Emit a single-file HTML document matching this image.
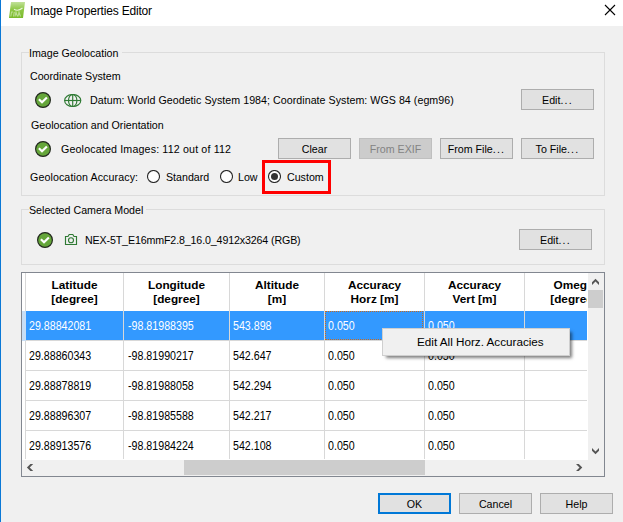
<!DOCTYPE html>
<html><head><meta charset="utf-8">
<style>
*{box-sizing:border-box;margin:0;padding:0}
html,body{width:623px;height:522px;overflow:hidden;background:#f0f0f0;position:relative;font-family:"Liberation Sans",sans-serif;font-size:10.67px;color:#000}
.a{position:absolute}
.t{position:absolute;white-space:nowrap;line-height:13px;font-size:10.67px}
.btn{position:absolute;width:73px;height:21px;background:#e1e1e1;border:1px solid #adadad;text-align:center;line-height:19px;padding-top:1px;font-size:10.67px;white-space:nowrap}
.dd{letter-spacing:1.2px}
.gb{position:absolute;border:1px solid #dcdcdc}
.chk{position:absolute;width:16px;height:16px}
.radio{position:absolute;width:13px;height:13px;border-radius:50%;background:#fff;border:1px solid #333}
.vl{position:absolute;width:1px;background:#d8d8d8}
.hl{position:absolute;height:1px;background:#d8d8d8}
.hd{position:absolute;font-weight:bold;font-size:11.8px;line-height:14px;text-align:center;white-space:nowrap}
.cell{position:absolute;white-space:nowrap;line-height:13px;font-size:10.67px;transform:scaleY(1.12);transform-origin:0 2px}
</style></head><body>
<!-- title bar -->
<div class="a" style="left:0;top:0;width:623px;height:26px;background:#fff"></div>
<div class="a" style="left:0;top:0;width:1px;height:522px;background:#0a78d6"></div>
<svg class="a" style="left:8px;top:1px" width="18" height="18" viewBox="0 0 18 18">
<defs><linearGradient id="ig" x1="0" y1="0" x2="0" y2="1"><stop offset="0" stop-color="#c2e19a"/><stop offset="0.45" stop-color="#8fc847"/><stop offset="1" stop-color="#7aba2c"/></linearGradient></defs>
<polygon points="3,1 17,1 15,17 1,17" fill="url(#ig)"/>
<path d="M6,8.2 Q10,10.8 14.5,7" stroke="#eaf5dc" stroke-width="1.1" fill="none"/>
<path d="M2.8,15.5 L3.6,11 L5,11 M5.5,15.5 L6.3,11 M7,15.5 L8,11 L9.5,15.5 M10,15.5 L11,11 L12.5,15.5" stroke="#cfe8b3" stroke-width="1.1" fill="none" opacity="0.75"/>
</svg>
<div class="t" style="left:30px;top:4px;font-size:12px;letter-spacing:-0.18px;line-height:14px">Image Properties Editor</div>
<svg class="a" style="left:604px;top:4px" width="12" height="12" viewBox="0 0 12 12"><path d="M1,1 L11,11 M11,1 L1,11" stroke="#000" stroke-width="1.1"/></svg>

<!-- group box 1 -->
<div class="gb" style="left:21px;top:52px;width:584px;height:144px"></div>
<div class="a" style="left:29px;top:46px;width:93px;height:12px;background:#f0f0f0"></div>
<div class="t" style="left:29px;top:47px">Image Geolocation</div>
<div class="t" style="left:30px;top:70px">Coordinate System</div>

<svg class="chk" style="left:35px;top:92px" viewBox="0 0 16 16"><circle cx="8" cy="8" r="7.4" fill="#65a63a" stroke="#23291f" stroke-width="1.2"/><path d="M3.9,7.3 L7,10.3 L11.9,5.5" stroke="#fff" stroke-width="2.2" fill="none"/></svg>
<svg class="a" style="left:64px;top:94px" width="18" height="14" viewBox="0 0 18 14"><g stroke="#2f7a34" stroke-width="1.15" fill="none"><ellipse cx="8.7" cy="6.5" rx="8.1" ry="6"/><ellipse cx="8.7" cy="6.5" rx="4.2" ry="6"/><line x1="8.7" y1="0.5" x2="8.7" y2="12.5"/><line x1="0.6" y1="6.5" x2="16.8" y2="6.5"/></g></svg>
<div class="t" style="left:90px;top:94px;letter-spacing:0.04px">Datum: World Geodetic System 1984; Coordinate System: WGS 84 (egm96)</div>
<div class="btn" style="left:521px;top:89px">Edit<span class="dd">...</span></div>

<div class="t" style="left:31px;top:119px">Geolocation and Orientation</div>
<svg class="chk" style="left:35px;top:141px" viewBox="0 0 16 16"><circle cx="8" cy="8" r="7.4" fill="#65a63a" stroke="#23291f" stroke-width="1.2"/><path d="M3.9,7.3 L7,10.3 L11.9,5.5" stroke="#fff" stroke-width="2.2" fill="none"/></svg>
<div class="t" style="left:61px;top:143px;letter-spacing:0.16px">Geolocated Images: 112 out of 112</div>
<div class="btn" style="left:278px;top:138px">Clear</div>
<div class="btn" style="left:359px;top:138px;background:#cccccc;border-color:#bfbfbf;color:#838383">From EXIF</div>
<div class="btn" style="left:440px;top:138px">From File<span class="dd">...</span></div>
<div class="btn" style="left:521px;top:138px">To File<span class="dd">...</span></div>

<div class="t" style="left:30px;top:171px;letter-spacing:0.1px">Geolocation Accuracy:</div>
<svg class="a" style="left:147px;top:170px" width="13" height="13" viewBox="0 0 13 13"><circle cx="6.5" cy="6.5" r="6" fill="#fff" stroke="#2a2a2a" stroke-width="1.1"/></svg>
<div class="t" style="left:166px;top:171px">Standard</div>
<svg class="a" style="left:220px;top:170px" width="13" height="13" viewBox="0 0 13 13"><circle cx="6.5" cy="6.5" r="6" fill="#fff" stroke="#2a2a2a" stroke-width="1.1"/></svg>
<div class="t" style="left:238px;top:171px">Low</div>
<svg class="a" style="left:268px;top:170px" width="13" height="13" viewBox="0 0 13 13"><circle cx="6.5" cy="6.5" r="6" fill="#fff" stroke="#2a2a2a" stroke-width="1.1"/></svg>
<div class="a" style="left:271px;top:173px;width:7px;height:7px;border-radius:50%;background:#333"></div>
<div class="t" style="left:287px;top:171px">Custom</div>
<div class="a" style="left:262px;top:160px;width:69px;height:34px;border:3px solid #f00"></div>

<!-- group box 2 -->
<div class="gb" style="left:21px;top:209px;width:584px;height:56px"></div>
<div class="a" style="left:29px;top:203px;width:117px;height:12px;background:#f0f0f0"></div>
<div class="t" style="left:29px;top:204px">Selected Camera Model</div>
<svg class="chk" style="left:37px;top:232px" viewBox="0 0 16 16"><circle cx="8" cy="8" r="7.4" fill="#65a63a" stroke="#23291f" stroke-width="1.2"/><path d="M3.9,7.3 L7,10.3 L11.9,5.5" stroke="#fff" stroke-width="2.2" fill="none"/></svg>
<svg class="a" style="left:64px;top:233px" width="14" height="13" viewBox="0 0 14 13"><g stroke="#2f7a34" stroke-width="1.15" fill="none"><path d="M1.5,3.5 H4 L5.2,1.5 H8.8 L10,3.5 H12.5 V11.5 H1.5 Z"/><circle cx="7" cy="7.2" r="2.5"/></g></svg>
<div class="t" style="left:85px;top:234px;letter-spacing:-0.13px">NEX-5T_E16mmF2.8_16.0_4912x3264 (RGB)</div>
<div class="btn" style="left:519px;top:229px">Edit<span class="dd">...</span></div>

<!-- table -->
<div class="a" style="left:21px;top:272px;width:584px;height:205px;border:1px solid #828790;background:#fff"></div>
<!-- selected row -->
<div class="a" style="left:26px;top:311px;width:561px;height:29px;background:#3399ff"></div>
<!-- grid lines -->
<div class="vl" style="left:25px;top:273px;height:186px"></div>
<div class="vl" style="left:123px;top:273px;height:186px"></div>
<div class="vl" style="left:229px;top:273px;height:186px"></div>
<div class="vl" style="left:324px;top:273px;height:186px"></div>
<div class="vl" style="left:424px;top:273px;height:186px"></div>
<div class="vl" style="left:524px;top:273px;height:186px"></div>
<div class="hl" style="left:26px;top:340px;width:561px"></div>
<div class="hl" style="left:26px;top:370px;width:561px"></div>
<div class="hl" style="left:26px;top:400px;width:561px"></div>
<div class="hl" style="left:26px;top:430px;width:561px"></div>
<div class="a" style="left:22px;top:311px;width:4px;height:30px;background:#c8def5"></div>
<!-- headers -->
<div class="hd" style="left:26px;top:278px;width:97px">Latitude<br>[degree]</div>
<div class="hd" style="left:124px;top:278px;width:105px">Longitude<br>[degree]</div>
<div class="hd" style="left:230px;top:278px;width:94px">Altitude<br>[m]</div>
<div class="hd" style="left:325px;top:278px;width:99px">Accuracy<br>Horz [m]</div>
<div class="hd" style="left:425px;top:278px;width:99px">Accuracy<br>Vert [m]</div>
<div class="a" style="left:525px;top:273px;width:62px;height:37px;overflow:hidden"><div class="hd" style="left:-1px;top:5px;width:99px">Omega<br>[degree]</div></div>
<!-- focus rect -->
<div class="a" style="left:325px;top:311px;width:98px;height:29px;border:1px dotted #c86a1e"></div>
<!-- cells -->
<div style="position:absolute;left:0;top:0;color:#fff">
<div class="cell" style="left:29px;top:319px">29.88842081</div>
<div class="cell" style="left:128px;top:319px">-98.81988395</div>
<div class="cell" style="left:233px;top:319px">543.898</div>
<div class="cell" style="left:328px;top:319px">0.050</div>
<div class="cell" style="left:428px;top:319px">0.050</div>
</div>
<div class="cell" style="left:29px;top:349px">29.88860343</div>
<div class="cell" style="left:128px;top:349px">-98.81990217</div>
<div class="cell" style="left:233px;top:349px">542.647</div>
<div class="cell" style="left:328px;top:349px">0.050</div>
<div class="cell" style="left:428px;top:349px">0.050</div>
<div class="cell" style="left:29px;top:379px">29.88878819</div>
<div class="cell" style="left:128px;top:379px">-98.81988058</div>
<div class="cell" style="left:233px;top:379px">542.294</div>
<div class="cell" style="left:328px;top:379px">0.050</div>
<div class="cell" style="left:428px;top:379px">0.050</div>
<div class="cell" style="left:29px;top:409px">29.88896307</div>
<div class="cell" style="left:128px;top:409px">-98.81985588</div>
<div class="cell" style="left:233px;top:409px">542.217</div>
<div class="cell" style="left:328px;top:409px">0.050</div>
<div class="cell" style="left:428px;top:409px">0.050</div>
<div class="cell" style="left:29px;top:439px">29.88913576</div>
<div class="cell" style="left:128px;top:439px">-98.81984224</div>
<div class="cell" style="left:233px;top:439px">542.108</div>
<div class="cell" style="left:328px;top:439px">0.050</div>
<div class="cell" style="left:428px;top:439px">0.050</div>

<!-- vertical scrollbar -->
<div class="a" style="left:588px;top:273px;width:16px;height:203px;background:#f0f0f0"></div>
<div class="a" style="left:588px;top:290px;width:15px;height:18px;background:#cdcdcd"></div>
<!-- horizontal scrollbar -->
<div class="a" style="left:22px;top:460px;width:566px;height:16px;background:#f0f0f0"></div>
<div class="a" style="left:184px;top:460px;width:241px;height:15px;background:#cdcdcd"></div>

<svg class="a" style="left:0;top:0" width="623" height="522"><g fill="#555">
<polygon points="592,285 595.5,281.5 599,285 599,282.2 595.5,278.7 592,282.2"/>
<polygon points="592,448 595.5,451.5 599,448 599,450.8 595.5,454.3 592,450.8"/>
<polygon points="33.2,464 29.7,467.5 33.2,471 30.4,471 26.9,467.5 30.4,464"/>
<polygon points="576,464 579.5,467.5 576,471 578.8,471 582.3,467.5 578.8,464"/>
</g></svg>
<!-- context menu -->
<div class="a" style="left:382px;top:328px;width:188px;height:28px;background:#f0f0f0;border:1px solid #cfcfcf;box-shadow:3px 3px 3px -1px rgba(0,0,0,0.5)"></div>
<div class="t" style="left:417px;top:335px;font-size:11.7px;line-height:14px">Edit All Horz. Accuracies</div>

<!-- footer buttons -->
<div class="btn" style="left:378px;top:493px;border:2px solid #0078d7;line-height:17px;padding-top:1px">OK</div>
<div class="btn" style="left:459px;top:493px">Cancel</div>
<div class="btn" style="left:540px;top:493px">Help</div>
</body></html>
